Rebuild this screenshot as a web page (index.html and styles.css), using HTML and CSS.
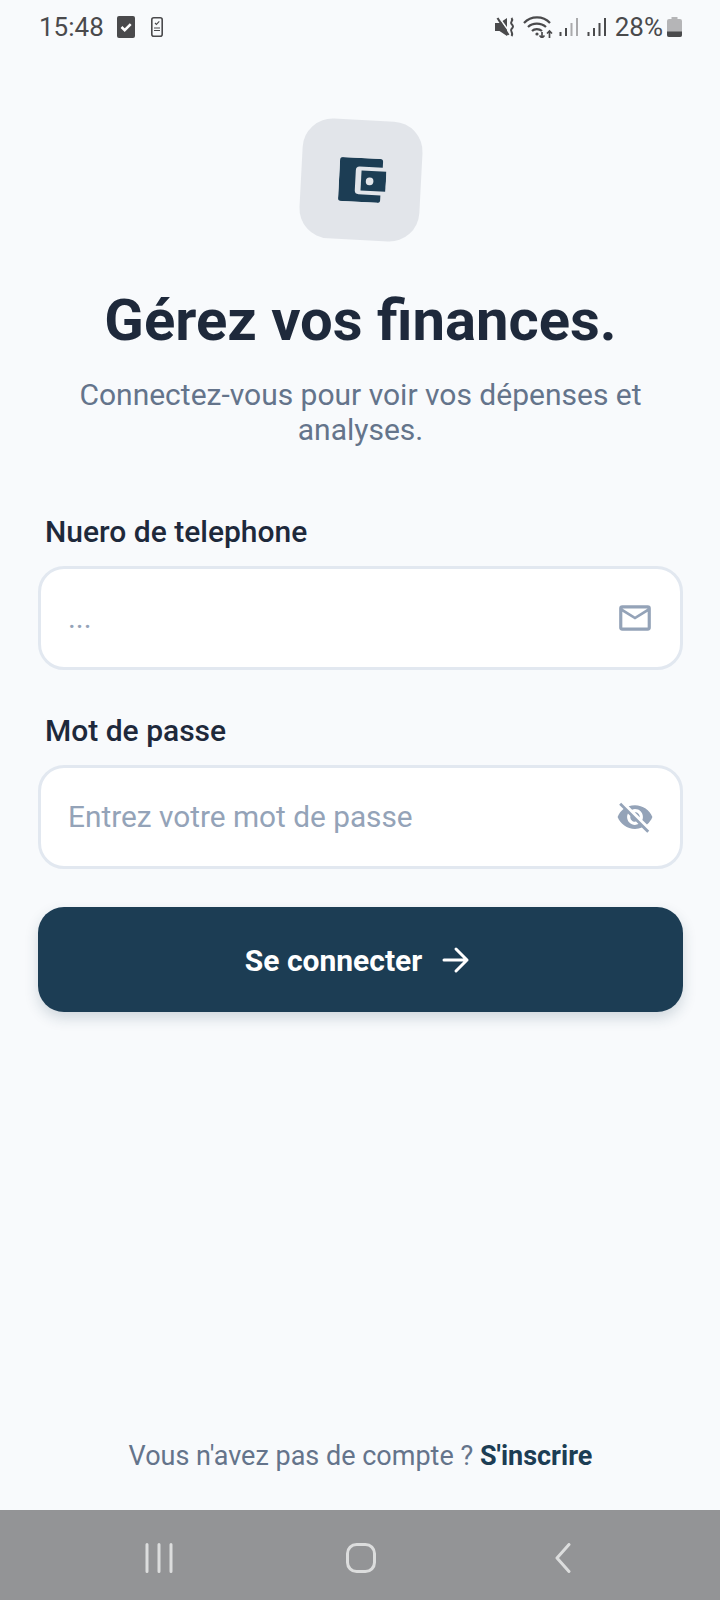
FILE: index.html
```html
<!DOCTYPE html>
<html lang="fr">
<head>
<meta charset="utf-8">
<title>Connexion</title>
<link rel="stylesheet" href="styles.css">
</head>
<body>
<div class="screen">
  <header class="status">
    <div class="status-left">
      <span class="time">15:48</span>
      <svg class="st-check" viewBox="0 0 18 22"><rect x="0" y="0" width="18" height="22" rx="2" fill="#4a4a4c"/><path d="M4.500 11l3.200 3.200 6-6" fill="none" stroke="#fff" stroke-width="2.600"/></svg>
      <svg class="st-phone" viewBox="0 0 12 20"><rect x="0.800" y="0.800" width="10.400" height="18.400" rx="2" fill="none" stroke="#4a4a4c" stroke-width="1.600"/><path d="M4 6l1.400 1.400L8.300 4.400M3 11h6M3 13.500h6" fill="none" stroke="#4a4a4c" stroke-width="1.100"/></svg>
    </div>
    <div class="status-right">
      <svg class="st-mute" viewBox="0 0 20 20"><path d="M0 6h4.500L12 1v18l-7.500-5H0z" fill="#4a4a4c"/><path d="M4 0.500l11 15" stroke="#f8fafc" stroke-width="1.600"/><path d="M2.500 1l11 17" stroke="#4a4a4c" stroke-width="2.200"/><path d="M16.500 1c2.500 3-2 4 0 6s2 3 0 5 2.500 4 0 7" fill="none" stroke="#4a4a4c" stroke-width="2"/></svg>
      <svg class="st-wifi" viewBox="0 0 30 22"><path d="M1 7c7-7.500 19-7.500 26 0M5 11c4.500-4.500 13-4.500 18 0M9 15c2.500-2.500 7-2.500 10 0" fill="none" stroke="#4a4a4c" stroke-width="2.200"/><circle cx="14" cy="18" r="1.600" fill="#4a4a4c"/><path d="M19 16v6m-2.500-2.500l2.500 2.500 2.500-2.500M26.500 22v-7m-2.500 2.500l2.500-2.500 2.500 2.500" fill="none" stroke="#4a4a4c" stroke-width="1.700"/></svg>
      <svg class="st-sig" viewBox="0 0 19 20"><path d="M1.500 19v-4M7 19v-8" stroke="#4a4a4c" stroke-width="2"/><path d="M12.500 19V6M18 19V1" stroke="#aaaaac" stroke-width="2"/></svg>
      <svg class="st-sig st-sig-2" viewBox="0 0 19 20"><path d="M1.500 19v-4M7 19v-8M12.500 19V6M18 19V1" stroke="#4a4a4c" stroke-width="2"/></svg>
      <span class="pct">28%</span>
      <svg class="st-batt" viewBox="0 0 15 20"><path d="M4.500 0h6v2h2.500a2 2 0 0 1 2 2v14a2 2 0 0 1-2 2H2a2 2 0 0 1-2-2V4a2 2 0 0 1 2-2h2.500z" fill="#b5b5b7"/><path d="M0 14.500h15V18a2 2 0 0 1-2 2H2a2 2 0 0 1-2-2z" fill="#4a4a4c"/></svg>
    </div>
  </header>

  <main class="main">
    <div class="logo">
      <svg class="logo-icon" viewBox="0 0 49 46"><path d="M3 0H42a3 3 0 0 1 3 3V9H21a4 4 0 0 0-4 4V34a4 4 0 0 0 4 4H44V43a3 3 0 0 1-3 3H3a3 3 0 0 1-3-3V3a3 3 0 0 1 3-3z" fill="#1c3d54"/><path d="M23 13H49V34H23z" fill="#1c3d54"/><circle cx="32" cy="24" r="4" fill="#e2e5ea"/></svg>
    </div>
    <h1 class="title">Gérez vos finances.</h1>
    <p class="subtitle">Connectez-vous pour voir vos dépenses et analyses.</p>

    <form class="form">
      <label class="label">Nuero de telephone</label>
      <div class="field">
        <span class="ph ph-dots">...</span>
        <svg class="field-icon" viewBox="0 0 24 24"><path d="M20 4H4a2 2 0 0 0-2 2v12a2 2 0 0 0 2 2h16a2 2 0 0 0 2-2V6a2 2 0 0 0-2-2zm0 14H4V8l8 5 8-5zm-8-7L4 6h16z" fill="#94a3b8"/></svg>
      </div>
      <label class="label label-2">Mot de passe</label>
      <div class="field">
        <span class="ph">Entrez votre mot de passe</span>
        <svg class="field-icon" viewBox="0 0 24 24"><path d="M12 7c2.760 0 5 2.240 5 5 0 .65-.13 1.260-.36 1.830l2.920 2.920c1.510-1.260 2.700-2.890 3.430-4.750-1.730-4.390-6-7.500-11-7.500-1.400 0-2.740.25-3.980.7l2.160 2.160C10.740 7.130 11.350 7 12 7zM2 4.270l2.280 2.280.46.46C3.080 8.300 1.780 10.020 1 12c1.730 4.390 6 7.500 11 7.500 1.550 0 3.030-.3 4.380-.84l.42.42L19.730 22 21 20.730 3.270 3 2 4.270zM7.530 9.800l1.550 1.550c-.05.21-.08.43-.08.65 0 1.660 1.340 3 3 3 .22 0 .44-.03.65-.08l1.550 1.550c-.67.33-1.410.53-2.200.53-2.760 0-5-2.240-5-5 0-.79.2-1.530.53-2.200zm4.310-.78l3.150 3.150.02-.16c0-1.660-1.340-3-3-3l-.17.010z" fill="#94a3b8"/></svg>
      </div>
      <button class="btn" type="button">
        <span>Se connecter</span>
        <svg class="btn-arrow" viewBox="0 0 28 28"><path d="M2 14h23M14 3l11 11-11 11" fill="none" stroke="#fff" stroke-width="3" stroke-linecap="round" stroke-linejoin="round"/></svg>
      </button>
    </form>

    <p class="foot">Vous n'avez pas de compte ? <strong>S'inscrire</strong></p>
  </main>

  <nav class="navbar">
    <svg class="nav-recent" viewBox="0 0 28 30"><path d="M2 1.500v27M14 1.500v27M26 1.500v27" stroke="#dcdddd" stroke-width="3" stroke-linecap="round"/></svg>
    <svg class="nav-home" viewBox="0 0 30 30"><rect x="1.500" y="1.500" width="27" height="27" rx="9" fill="none" stroke="#dcdddd" stroke-width="3"/></svg>
    <svg class="nav-back" viewBox="0 0 16 30"><path d="M14 1.500L2 15l12 13.500" fill="none" stroke="#dcdddd" stroke-width="3" stroke-linecap="round" stroke-linejoin="round"/></svg>
  </nav>
</div>
</body>
</html>
```
FILE: styles.css
```css
* { box-sizing: border-box; }
html, body { margin: 0; padding: 0; }
body { font-family: Roboto, "Liberation Sans", sans-serif; background: #f8fafc; }
.screen { width: 720px; height: 1600px; display: flex; flex-direction: column; background: #f8fafc; overflow: hidden; }

.status { height: 54px; flex: none; display: flex; justify-content: space-between; align-items: center; padding: 0 38px 0 39px; color: #4a4a4c; }
.status-left, .status-right { display: flex; align-items: center; }
.time, .pct { font-size: 26px; line-height: 30px; }
.st-check { width: 18px; height: 22px; margin-left: 13px; }
.st-phone { width: 12px; height: 20px; margin-left: 16px; }
.st-mute { width: 20px; height: 20px; }
.st-wifi { width: 30px; height: 22px; margin-left: 8px; }
.st-sig { width: 19px; height: 20px; margin-left: 6px; }
.st-sig-2 { margin-left: 9px; }
.pct { margin-left: 9px; }
.st-batt { width: 15px; height: 20px; margin-left: 4px; }

.main { flex: 1; display: flex; flex-direction: column; align-items: center; padding: 66px 37px 0 38px; }
.logo { width: 120px; height: 120px; border-radius: 30px; background: #e2e5ea; transform: rotate(3deg); display: flex; align-items: center; justify-content: center; flex: none; }
.logo-icon { width: 47px; height: 44px; margin-left: 2px; }
.title { margin: 44px 0 0; font-size: 58px; line-height: 72px; font-weight: 700; color: #1e293b; text-align: center; white-space: nowrap; }
.subtitle { margin: 21px 0 0; font-size: 30px; line-height: 35px; color: #64748b; text-align: center; width: 600px; }

.form { width: 100%; margin-top: 67px; display: flex; flex-direction: column; }
.label { font-size: 30px; line-height: 36px; font-weight: 480; color: #1e293b; margin: 0 0 16px 7px; }
.label-2 { margin-top: 43px; }
.field { height: 104px; border: 3px solid #e2e8f0; border-radius: 26px; background: #fff; display: flex; align-items: center; justify-content: space-between; padding: 0 26px 0 27px; }
.ph { font-size: 29.800px; color: #94a3b8; padding-bottom: 2px; }
.field-icon { width: 38px; height: 38px; }

.btn { margin-top: 38px; height: 105px; border: 0; border-radius: 26px; background: #1c3d54; color: #fff; font: 700 30px Roboto, sans-serif; display: flex; align-items: center; justify-content: center; gap: 20px; padding: 2px 6px 0 0; box-shadow: 0 6px 14px rgba(28, 61, 84, .18); }
.btn-arrow { width: 28px; height: 28px; margin-top: -2px; }

.foot { margin: auto 0 38px; font-size: 27px; line-height: 32px; color: #64748b; text-align: center; }
.foot strong { color: #1c3d54; font-weight: 700; }

.navbar { height: 90px; flex: none; background: #939496; display: grid; grid-template-columns: repeat(3, 202px); justify-content: center; justify-items: center; align-items: center; padding: 5px 0 0 2px; }
.nav-recent { width: 28px; height: 30px; }
.nav-home { width: 30px; height: 30px; }
.nav-back { width: 16px; height: 30px; }
```
